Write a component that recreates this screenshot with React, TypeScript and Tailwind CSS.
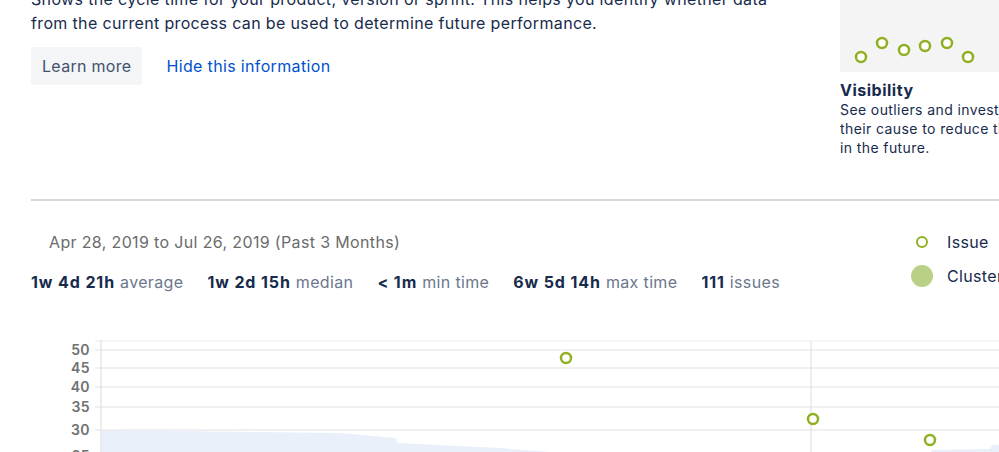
import React from 'react'

const stats = [
  { value: '1w 4d 21h', label: 'average' },
  { value: '1w 2d 15h', label: 'median' },
  { value: '< 1m', label: 'min time' },
  { value: '6w 5d 14h', label: 'max time' },
  { value: '111', label: 'issues' },
]

const yTicks = [
  { label: '50', y: 20 },
  { label: '45', y: 38 },
  { label: '40', y: 57 },
  { label: '35', y: 77 },
  { label: '30', y: 100 },
  { label: '25', y: 126 },
]

const points = [
  [566, 28],
  [813, 89],
  [930, 110],
]

const previewDots = [
  [21, 70],
  [42, 56],
  [64, 63],
  [85, 59],
  [107, 56],
  [128, 70],
]

const Chart = () => (
  <svg width="999" height="130" className="block">
    <polygon
      points="101,100 180,101 340,103 396,108 397,113 500,118 550,122 556,130 925,130 932,120 990,119 992,115 999,115 999,130 101,130"
      fill="#e9f0fa"
    />
    <line x1="95" y1="11" x2="999" y2="11" stroke="#ececec" strokeWidth="1" />
    {yTicks.map((t) => (
      <g key={t.label}>
        <line x1="95" y1={t.y} x2="999" y2={t.y} stroke="#ebebeb" strokeWidth="1.5" />
        <text
          x="90"
          y={t.y + 5}
          textAnchor="end"
          fontSize="14"
          fontWeight="600"
          fill="#707070"
          fontFamily="Inter, sans-serif"
          letterSpacing="0.4"
        >
          {t.label}
        </text>
      </g>
    ))}
    <line x1="101" y1="10" x2="101" y2="130" stroke="#e6e6e6" strokeWidth="1.5" />
    <line x1="811" y1="11" x2="811" y2="130" stroke="#dcdcdc" strokeWidth="1" />
    {points.map(([x, y]) => (
      <circle key={x} cx={x} cy={y} r="5" fill="#fff" stroke="#8eb021" strokeWidth="2.5" />
    ))}
  </svg>
)

const App = () => {
  return (
    <div className="w-[999px] h-[452px] overflow-hidden bg-white font-['Inter',sans-serif] tracking-[0.35px] text-[#172b4d]">
      <section className="flex -mt-[13px]">
        <div className="w-[840px] shrink-0 pl-[31px]">
          <p className="text-base leading-6">
            Shows the cycle time for your product, version or sprint. This helps you identify whether data
            <br />
            from the current process can be used to determine future performance.
          </p>
          <div className="flex items-center gap-6 mt-3">
            <button className="h-[38px] px-[11px] rounded-[3px] bg-[#f4f5f7] text-[#42526e] text-base tracking-[0.3px]">
              Learn more
            </button>
            <a href="#" className="text-[#0052cc] text-base">Hide this information</a>
          </div>
        </div>
        <div className="w-[200px] shrink-0">
          <div className="h-[85px] bg-[#f4f4f4]">
            <svg width="200" height="85" className="block">
              {previewDots.map(([x, y]) => (
                <circle key={x} cx={x} cy={y} r="5" fill="#fff" stroke="#8eb021" strokeWidth="2.5" />
              ))}
            </svg>
          </div>
          <h3 className="mt-2 text-base leading-5 font-bold tracking-[0.5px]">Visibility</h3>
          <p className="text-sm leading-[19px] whitespace-nowrap tracking-[0.4px]">
            See outliers and investigate
            <br />
            their cause to reduce them
            <br />
            in the future.
          </p>
        </div>
      </section>

      <div className="ml-[31px] mt-[42px] h-[2px] bg-[#d6d6d6]"></div>

      <section className="flex">
        <div className="flex-1 pl-[31px]">
          <p className="mt-[29px] pl-[18px] text-base leading-6 text-[#6b6b6b]">
            Apr 28, 2019 to Jul 26, 2019 (Past 3 Months)
          </p>
          <div className="flex gap-6 mt-4 text-base leading-6">
            {stats.map((s) => (
              <div key={s.label} className="flex gap-[5px]">
                <span className="font-bold tracking-[0.9px]">{s.value}</span>
                <span className="text-[#6b778c]">{s.label}</span>
              </div>
            ))}
          </div>
        </div>
        <div className="w-[88px] shrink-0 mt-[29px] flex flex-col gap-[11px]">
          <div className="flex items-center gap-[14px] h-6">
            <div className="w-[22px] shrink-0 flex justify-center">
              <div className="w-[12px] h-[12px] rounded-full border-[2.5px] border-[#8eb021]"></div>
            </div>
            <span className="text-base whitespace-nowrap">Issue</span>
          </div>
          <div className="flex items-center gap-[14px] h-[22px]">
            <div className="w-[22px] h-[22px] shrink-0 rounded-full bg-[#b9d185]"></div>
            <span className="text-base whitespace-nowrap">Cluster</span>
          </div>
        </div>
      </section>

      <div className="mt-9">
        <Chart />
      </div>
    </div>
  )
}

export default App
